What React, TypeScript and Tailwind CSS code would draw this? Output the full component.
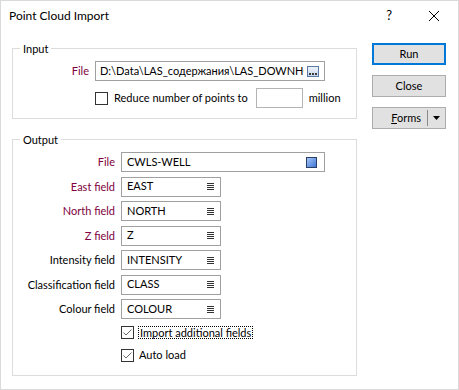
import React from 'react';

const font = { fontFamily: 'Lato, "Noto Sans", "DejaVu Sans", sans-serif' };

const ListIcon: React.FC = () => (
  <svg width="7" height="7" viewBox="0 0 7 7" className="shrink-0">
    <rect x="0" y="0" width="7" height="1" fill="#333" />
    <rect x="0" y="2" width="7" height="1" fill="#333" />
    <rect x="0" y="4" width="7" height="1" fill="#333" />
    <rect x="0" y="6" width="7" height="1" fill="#333" />
  </svg>
);

const Check: React.FC<{ checked?: boolean }> = ({ checked }) => (
  <span className="w-[13px] h-[13px] border border-[#333] bg-white shrink-0 flex items-center justify-center">
    {checked && (
      <svg width="11" height="11" viewBox="0 0 11 11">
        <polyline points="1.5,5.5 4,8 9.5,2.5" fill="none" stroke="#6b6b6b" strokeWidth="1" />
      </svg>
    )}
  </span>
);

const FieldRow: React.FC<{ label: string; value: string; required?: boolean }> = ({ label, value, required }) => (
  <>
    <span className={`text-right text-[11px] leading-5 ${required ? 'text-[#800040]' : 'text-black'}`}>{label}</span>
    <div className="w-[100px] h-5 border border-[#a0a0a0] flex items-center pl-[5px] pr-[6px]">
      <span className="flex-1 text-[11px] text-black">{value}</span>
      <ListIcon />
    </div>
  </>
);

export default function App() {
  return (
    <div className="w-[459px] h-[390px] border border-[#dadada] bg-white flex flex-col text-black" style={font}>
      <div className="h-[30px] flex items-center pl-[8px] shrink-0">
        <span className="text-[12px]">Point Cloud Import</span>
        <span className="ml-auto text-[13px] mr-[37px]">?</span>
        <svg width="10" height="10" viewBox="0 0 10 10" className="mr-[19px]">
          <line x1="0" y1="0" x2="10" y2="10" stroke="#000" strokeWidth="1" />
          <line x1="10" y1="0" x2="0" y2="10" stroke="#000" strokeWidth="1" />
        </svg>
      </div>

      <div className="flex flex-1">
        <div className="w-[345px] ml-[11px] flex flex-col">
          <fieldset className="mt-[10px] border border-[#dcdcdc] pt-[5px] pb-[10px]">
            <legend className="ml-[7px] px-[3px] text-[11px] leading-[15px]">Input</legend>
            <div className="flex items-center">
              <span className="w-[76px] text-right text-[11px] text-[#800040]">File</span>
              <div className="ml-[6px] w-[230px] h-5 border border-[#a0a0a0] flex items-center pl-[4px] pr-[5px]">
                <span className="flex-1 overflow-hidden whitespace-nowrap text-[11px]">D:\Data\LAS_содержания\LAS_DOWNHC</span>
                <svg width="12" height="11" viewBox="0 0 12 11" className="shrink-0 ml-[3px]">
                  <defs>
                    <linearGradient id="bg1" x1="0" y1="0" x2="0" y2="1">
                      <stop offset="0" stopColor="#eef3fa" />
                      <stop offset="1" stopColor="#c9d8ec" />
                    </linearGradient>
                  </defs>
                  <rect x="0.5" y="0.5" width="11" height="10" fill="url(#bg1)" stroke="#5a7aa6" />
                  <rect x="2" y="7" width="2" height="2" fill="#3b3b3b" />
                  <rect x="5" y="7" width="2" height="2" fill="#3b3b3b" />
                  <rect x="8" y="7" width="2" height="2" fill="#3b3b3b" />
                </svg>
              </div>
            </div>
            <div className="flex items-center mt-[7px] ml-[82px]">
              <Check />
              <span className="ml-[6px] text-[11px]">Reduce number of points to</span>
              <div className="ml-[8px] w-[47px] h-5 border border-[#b4b4b4]" />
              <span className="ml-[6px] text-[11px]">million</span>
            </div>
          </fieldset>

          <fieldset className="mt-[13px] border border-[#dcdcdc] pt-[5px] pb-[13px]">
            <legend className="ml-[7px] px-[3px] text-[11px] leading-[15px]">Output</legend>
            <div className="grid grid-cols-[102px_auto] gap-x-[6px] gap-y-[4.5px] justify-start">
              <span className="text-right text-[11px] leading-5 text-[#800040]">File</span>
              <div className="w-[204px] h-5 border border-[#a0a0a0] flex items-center pl-[5px] pr-[7px]">
                <span className="flex-1 text-[11px]">CWLS-WELL</span>
                <svg width="11" height="11" viewBox="0 0 11 11" className="shrink-0">
                  <defs>
                    <linearGradient id="bl1" x1="0" y1="0" x2="1" y2="1">
                      <stop offset="0" stopColor="#a9c8f5" />
                      <stop offset="1" stopColor="#3e74d6" />
                    </linearGradient>
                  </defs>
                  <rect x="0.5" y="0.5" width="10" height="10" fill="url(#bl1)" stroke="#2a3f66" />
                </svg>
              </div>
              <FieldRow label="East field" value="EAST" required />
              <FieldRow label="North field" value="NORTH" required />
              <FieldRow label="Z field" value="Z" required />
              <FieldRow label="Intensity field" value="INTENSITY" />
              <FieldRow label="Classification field" value="CLASS" />
              <FieldRow label="Colour field" value="COLOUR" />
            </div>
            <div className="flex items-center mt-[7px] ml-[108px] h-[13px]">
              <Check checked />
              <span className="ml-[4px] px-[1px] border border-dotted border-black text-[11px] leading-[11px] h-[13px]">Import additional fields</span>
            </div>
            <div className="flex items-center mt-[10px] ml-[108px] h-[13px]">
              <Check checked />
              <span className="ml-[5px] text-[11px]">Auto load</span>
            </div>
          </fieldset>
        </div>

        <div className="ml-[15px] mt-[12px] w-[74px] flex flex-col gap-[10px]">
          <button className="h-[22px] border-2 border-[#0078d7] bg-[#e1e1e1] text-[11px]">Run</button>
          <button className="h-[22px] border border-[#adadad] bg-[#e1e1e1] text-[11px]">Close</button>
          <button className="h-[22px] border border-[#adadad] bg-[#e1e1e1] text-[11px] flex items-center">
            <span className="flex-1 text-right pr-[6px]"><span className="underline">F</span>orms</span>
            <span className="w-px h-[16px] bg-[#8a8a8a]" />
            <svg width="7" height="4" viewBox="0 0 7 4" className="mx-[5px]">
              <polygon points="0,0 7,0 3.5,4" fill="#000" />
            </svg>
          </button>
        </div>
      </div>
    </div>
  );
}
